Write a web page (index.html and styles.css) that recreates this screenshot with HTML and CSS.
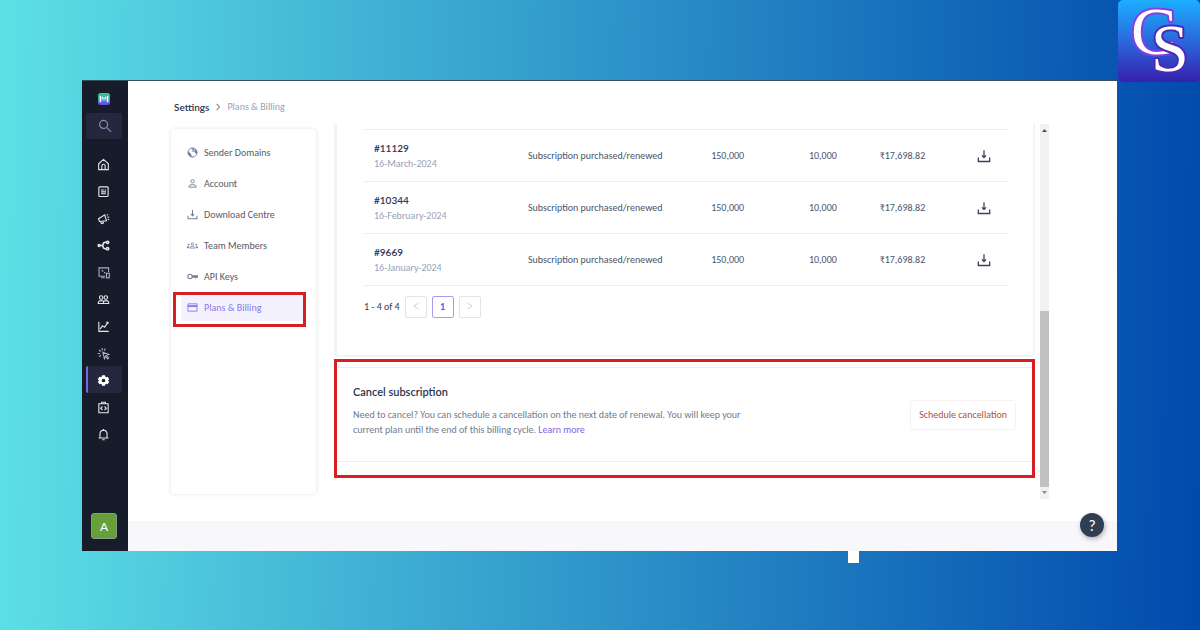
FILE: index.html
```html
<!DOCTYPE html>
<html lang="en">
<head>
<meta charset="utf-8">
<title>Plans &amp; Billing</title>
<link rel="stylesheet" href="styles.css">
</head>
<body>
<svg class="defs" width="0" height="0" aria-hidden="true">
  <symbol id="download" viewBox="0 0 14 14"><path d="M7 1.2v7M4.9 6.4 7 8.5l2.1-2.1M1.3 8.6v3.9h11.4V8.6" fill="none" stroke="currentColor" stroke-width="1.3"/></symbol>
</svg>
<div class="app">
  <nav class="rail" aria-label="Main">
    <svg class="brand" viewBox="0 0 12 12"><defs><linearGradient id="bg" x1="0" y1="0" x2="0" y2="1"><stop offset="0" stop-color="#35d07f"/><stop offset=".5" stop-color="#3a9fc0"/><stop offset="1" stop-color="#6a3fe8"/></linearGradient></defs><rect width="12" height="12" rx="2.5" fill="url(#bg)"/><path d="M2.500 3v6M9.500 3v6" stroke="#fff" stroke-width="1.600"/><path d="M4.500 3.800v2.400M6 4.200v3.400M7.500 3.800v2.400" stroke="#fff" stroke-width=".9"/></svg>
    <button class="search" aria-label="Search"><svg viewBox="0 0 14 14"><circle cx="5.6" cy="5.4" r="4" /><path d="m8.6 8.4 4.4 4.4"/></svg></button>
    <a class="item" href="#" aria-label="Home"><svg viewBox="0 0 14 14"><path d="M1.8 6.2 7 1.5l5.2 4.7v6.3H1.8zM5.2 12.3V8.6Q5.2 6.8 7 6.8t1.8 1.8v3.7"/></svg></a>
    <a class="item" href="#" aria-label="Lists"><svg viewBox="0 0 14 14"><rect x="2" y="2" width="10" height="10.4" rx="1"/><path d="M4.3 5.4h3M8.2 5.4h1.5M4.3 7.4h5.4M4.3 9.4h5.4"/></svg></a>
    <a class="item" href="#" aria-label="Campaigns"><svg viewBox="0 0 14 14"><path d="M1.6 7.2 8.3 3l1.9 6.5-7.5.7zM3.8 10.2l1 2.2 2.1-.4-.6-2M10.6 3.7l1-1.3M11.2 5.8l1.9-.5M11.6 7.8l1.6.5"/></svg></a>
    <a class="item bold" href="#" aria-label="Workflows"><svg viewBox="0 0 14 14"><circle cx="2.3" cy="7" r="1.1"/><path d="M3.4 7H6M10 3.4H9Q6.3 3.4 6.3 7T9 10.6h1"/><circle cx="11.4" cy="3.6" r="1.3"/><circle cx="11.4" cy="10.4" r="1.3"/></svg></a>
    <a class="item dim" href="#" aria-label="Channels"><svg viewBox="0 0 14 14"><path d="M8.7 11H2.2V2h10.3v4.5M4.4 12.6h4M5 4.4l1.8 1.5M7.6 6.6l1.5 1.3"/><rect x="10.2" y="7.8" width="3" height="5"/></svg></a>
    <a class="item" href="#" aria-label="Audience"><svg viewBox="0 0 14 14"><circle cx="4.5" cy="4.9" r="1.9"/><circle cx="9.5" cy="4.9" r="1.9"/><path d="M1.4 11.3V10Q1.8 8.2 4.5 8.2T7 9.6v1.7zM7 11.3h5.6V10Q12.2 8.2 9.5 8.2 7.4 8.2 7 9.6"/></svg></a>
    <a class="item" href="#" aria-label="Reports"><svg viewBox="0 0 14 14"><path d="M2 1.8v10.4h10.6M3.4 9.8l2.4-3.6 2.4 1.5 3.5-5.2M9.8 2.4h2v2"/></svg></a>
    <a class="item dim" href="#" aria-label="Events"><svg viewBox="0 0 14 14"><path d="M6.2 5.6 12.6 8 10 9.2l2.6 2.6-1 1L9 10.2 8 12.6zM5.4 1.2l.5 2.4M8.9 1.7 7.9 4M2.1 3.3l2 1.5M.8 7h2.6M2.3 10.5l1.9-1.8"/></svg></a>
    <a class="item active" href="#" aria-label="Settings"><svg viewBox="0 0 14 14"><path fill="#fff" stroke="none" fill-rule="evenodd" d="m5.4 1.4 3.2 0 .4 1.5 1 .6 1.5-.5 1.6 2.7-1.1 1.1v.4l1.1 1.1-1.6 2.7-1.5-.5-1 .6-.4 1.5H5.4L5 11.1l-1-.6-1.5.5L.9 8.3 2 7.2v-.4L.9 5.7 2.5 3l1.5.5 1-.6zM7 5a2 2 0 1 0 0 4 2 2 0 0 0 0-4z"/></svg></a>
    <a class="item" href="#" aria-label="Integrations"><svg viewBox="0 0 14 14"><path d="M2 3h10v9.6H2zM5 3V1.4h4V3M5.9 5.9 4 7.8l1.9 1.9M8.1 5.9 10 7.8 8.1 9.7"/></svg></a>
    <a class="item" href="#" aria-label="Notifications"><svg viewBox="0 0 14 14"><path d="M1.8 10.8h10.4M3.2 10.8V6.2Q3.4 2.7 7 2.3q3.6.4 3.8 3.9v4.6M7 1v1.3M5.7 12.6h2.6"/></svg></a>
    <button class="avatar">A</button>
  </nav>
  <main class="main">
    <nav class="crumbs" aria-label="Breadcrumb"><a href="#">Settings</a><svg viewBox="0 0 6 8"><path d="m1.5.8 3 3.2-3 3.2"/></svg><span>Plans &amp; Billing</span></nav>
    <div class="body">
      <ul class="menu">
        <li><a href="#"><svg viewBox="0 0 12 12"><circle cx="6" cy="6" r="5" fill="none" stroke="currentColor"/><path fill="currentColor" d="M1.2 4.5 4.6 7.6V9L6 10v1Q1.3 10.500 1 6zM4 1.600 8 1l.3 1.500L7 3.600H5.800L5 5h3l1 1.800 1 .2.800 1L11 5 9 2l-.5 2z"/></svg>Sender Domains</a></li>
        <li><a href="#"><svg viewBox="0 0 12 12"><g fill="none" stroke="currentColor"><circle cx="6" cy="3.600" r="1.800"/><path d="M2 10V9q.6-1.800 4-1.800T10 9v1z"/></g></svg>Account</a></li>
        <li><a href="#"><svg viewBox="0 0 14 14"><use href="#download"/></svg>Download Centre</a></li>
        <li><a href="#"><svg viewBox="0 0 14 12"><g fill="currentColor"><circle cx="2" cy="5" r="1.100"/><circle cx="12" cy="5" r="1.100"/><path d="M0 9.500V8q.5-1.200 2.500-1L2.300 9.500zM14 9.500V8q-.5-1.200-2.500-1l.2 2.500z"/></g><g fill="none" stroke="currentColor"><circle cx="7" cy="4" r="1.500"/><path d="M3.800 9.300V8.500Q4.300 7 7 7t3.200 1.500v.8z"/></g></svg>Team Members</a></li>
        <li><a href="#"><svg viewBox="0 0 12 12"><g fill="none" stroke="currentColor" stroke-width="1.200"><circle cx="3.300" cy="6" r="2.400"/><path d="M5.600 5.300h6v1.400h-6M9.500 6.500v1.800"/></g></svg>API Keys</a></li>
        <li class="current"><a href="#" aria-current="page"><svg viewBox="0 0 12 12"><path fill="none" stroke="currentColor" d="M1 2h10v8H1z"/><path fill="currentColor" d="M1 3.500h10v2H1z"/></svg>Plans &amp; Billing</a></li>
      </ul>
      <div class="content">
        <section class="panel">
          <table>
            <colgroup><col class="c-id"><col class="c-desc"><col class="c-mails"><col class="c-contacts"><col class="c-amount"><col></colgroup>
            <tr><td><b>#11129</b><small>16-March-2024</small></td><td>Subscription purchased/renewed</td><td>150,000</td><td>10,000</td><td>₹17,698.82</td><td><button aria-label="Download invoice 11129"><svg><use href="#download"/></svg></button></td></tr>
            <tr><td><b>#10344</b><small>16-February-2024</small></td><td>Subscription purchased/renewed</td><td>150,000</td><td>10,000</td><td>₹17,698.82</td><td><button aria-label="Download invoice 10344"><svg><use href="#download"/></svg></button></td></tr>
            <tr><td><b>#9669</b><small>16-January-2024</small></td><td>Subscription purchased/renewed</td><td>150,000</td><td>10,000</td><td>₹17,698.82</td><td><button aria-label="Download invoice 9669"><svg><use href="#download"/></svg></button></td></tr>
          </table>
          <div class="pager"><span>1 - 4 of 4</span><button disabled aria-label="Previous"><svg viewBox="0 0 6 8"><path d="M5.500 1 .8 4l4.700 3"/></svg></button><button class="on">1</button><button disabled aria-label="Next"><svg viewBox="0 0 6 8"><path d="m.5 1 4.700 3L.5 7"/></svg></button></div>
        </section>
        <section class="marked">
          <div class="cancel">
            <div class="copy"><h2>Cancel subscription</h2><p>Need to cancel? You can schedule a cancellation on the next date of renewal. You will keep your current plan until the end of this billing cycle. <a href="#">Learn more</a></p></div>
            <button>Schedule cancellation</button>
          </div>
        </section>
      </div>
      <div class="scroll" aria-hidden="true"><svg viewBox="0 0 9 12"><path fill="#505050" d="M2 8h5L4.500 5z"/></svg><span></span><svg viewBox="0 0 9 12"><path fill="#8a8a8a" d="M2 4h5L4.500 7z"/></svg></div>
    </div>
    <div class="strip"></div>
  </main>
  <button class="help" aria-label="Help">?</button>
  <span class="patch"></span>
</div>
<svg class="logo" viewBox="0 0 82 82" role="img" aria-label="CS">
  <defs><linearGradient id="lg" x1="0" y1="0" x2="0" y2="1"><stop offset="0" stop-color="#1caeff"/><stop offset=".5" stop-color="#2a68dc"/><stop offset="1" stop-color="#3720ad"/></linearGradient></defs>
  <rect width="82" height="82" rx="5" fill="url(#lg)"/>
  <text class="glow" x="13" y="54">C</text><text class="edge" x="33" y="71">S</text>
</svg>
</body>
</html>
```
FILE: styles.css
```css
* { box-sizing: border-box; }
body {
  margin: 0;
  min-height: 100vh;
  padding: 80px 83px 79px 82px;
  display: flex;
  font: 10px/14px Carlito, Lato, "Liberation Sans", sans-serif;
  color: #4b5468;
  background: linear-gradient(91deg, #5de0e6, #004aad);
}
a { color: inherit; text-decoration: none; }
button { font: inherit; color: inherit; padding: 0; border: 0; background: none; }
.defs { position: absolute; }
.app {
  position: relative;
  flex: 1;
  display: flex;
  border-top: 1px solid #36505f;
  background: #fff;
}

.rail {
  width: 46px;
  padding: 12px 6px 12px 4px;
  display: flex;
  flex-direction: column;
  align-items: stretch;
  background: #171c2a;
}
.rail svg { width: 13px; height: 13px; fill: none; stroke: #e3e6ee; stroke-width: 1.2; }
.rail .brand { width: 12px; height: 12px; stroke: none; align-self: center; }
.search {
  height: 26px;
  margin: 8px 0 11px;
  padding-left: 2px;
  display: grid;
  place-items: center;
  border-radius: 2px;
  background: #25273f;
}
.rail .search svg { width: 14px; height: 14px; stroke: #8d91a3; }
.item { height: 27px; display: grid; place-items: center; padding: 1px 2px 0 0; }
.rail .bold svg { stroke-width: 1.6; }
.rail .dim svg { stroke: #a9aebb; }
.item.active { border-left: 2px solid #7166e8; border-radius: 2px; background: #25273f; padding-right: 4px; }
.avatar {
  width: 26px;
  height: 26px;
  margin: auto auto 0;
  border: 1px solid #8a9a86;
  border-radius: 3px;
  background: #65a038;
  color: #fff;
  font: 12px Lato, sans-serif;
}

.main { flex: 1; min-width: 0; display: flex; flex-direction: column; }
.crumbs {
  display: flex;
  align-items: center;
  gap: 6px;
  padding: 18px 46px 9px;
  line-height: 16px;
  color: #98a1b8;
}
.crumbs a { font-family: Lato, sans-serif; font-weight: 600; color: #2b3550; }
.crumbs svg { width: 6px; height: 8px; fill: none; stroke: #4b5468; }
.body { flex: 1; display: flex; padding: 0 68px 0 43px; }
.menu {
  width: 145px;
  margin: 5px 18px 5px 0;
  padding: 8px 12px 9px 10px;
  list-style: none;
  border-radius: 4px;
  box-shadow: 0 0 4px #0000001f;
}
.menu li { position: relative; padding: 2px 0; }
.menu a { height: 27px; padding-left: 6px; display: flex; align-items: center; gap: 6px; color: #555b68; }
.menu svg { width: 11px; height: 11px; color: #71809b; }
.menu .current a, .menu .current svg { color: #8c78e6; }
.menu .current a { background: #f5f2ff; }
.menu .current::after {
  content: "";
  position: absolute;
  inset: 0 -2px -4px -8px;
  border: 3px solid #d81e22;
}
.content { flex: 1; min-width: 0; display: flex; flex-direction: column; gap: 2px; }
.panel {
  padding: 5px 26px 37px 27px;
  border: 2px solid #f4f4f5;
  border-top: 0;
  border-left-width: 3px;
  border-radius: 0 0 5px 5px;
}
table { width: 100%; table-layout: fixed; border-collapse: collapse; border-bottom: 1px solid #ececee; }
.c-id { width: 25.500%; }
.c-desc { width: 28.500%; }
.c-mails { width: 15.200%; }
.c-contacts { width: 11%; }
.c-amount { width: 12.800%; }
td { height: 52px; padding: 0; border-top: 1px solid #ececee; }
td:first-child { padding-left: 10px; }
td b, td small { display: block; line-height: 15px; }
td b { font-family: Lato, sans-serif; font-weight: 600; color: #2b3550; }
td small { font-size: 10px; color: #98a1b8; }
td button { display: block; margin: auto; color: #3c455c; }
td svg { display: block; width: 14px; height: 14px; }
.pager { display: flex; align-items: center; gap: 5px; padding-top: 10px; color: #30384c; }
.pager button { width: 22px; height: 22px; border: 1px solid #e4e4e6; border-radius: 2px; background: #fff; }
.pager .on { border-color: #a99cf0; color: #6a55e0; font-weight: 600; }
.pager svg { width: 6px; height: 8px; fill: none; stroke: #c4c4c8; stroke-width: .8; }
.marked { border: 3px solid #d81e22; padding: 5px 0 13px; }
.cancel {
  min-height: 95px;
  padding: 0 16px;
  display: flex;
  align-items: center;
  justify-content: space-between;
  gap: 20px;
  border: solid #ededf0;
  border-width: 1px 0;
}
.copy { max-width: 402px; padding-bottom: 9px; }
h2 { margin: 0 0 7px; font: 600 11px/16px Lato, sans-serif; color: #2b3550; }
p { margin: 0; line-height: 15px; color: #717d8c; }
p a { color: #7b68e8; }
.cancel button { height: 30px; padding: 0 8px; border: 1px solid #f7f1f1; border-radius: 3px; color: #b0503f; white-space: nowrap; }
.scroll { width: 9px; margin-left: 5px; display: flex; flex-direction: column; background: #f1f1f1; }
.scroll svg { width: 9px; height: 12px; }
.scroll span { flex: 1; margin-top: 175px; background: #c1c1c1; }
.strip { height: 30px; margin-top: 22px; background: #f8f8fc; }
.help {
  position: absolute;
  right: 13px;
  bottom: 14px;
  width: 24px;
  height: 24px;
  border-radius: 50%;
  background: #303e54;
  box-shadow: 1px 2px 5px #0000004d;
  color: #fff;
  font: 15px Lato, sans-serif;
}
.patch { position: absolute; right: 258px; top: 100%; width: 11px; height: 12px; background: #fff; }
.logo { position: absolute; top: 0; right: 0; width: 82px; height: 82px; overflow: visible; }
.logo text { font: 68px "Liberation Serif", serif; fill: #fff; paint-order: stroke; stroke-linejoin: round; }
.glow { stroke: #8a3ce0; stroke-width: 4px; }
.edge { stroke: #4a28b8; stroke-width: 4px; }
```
